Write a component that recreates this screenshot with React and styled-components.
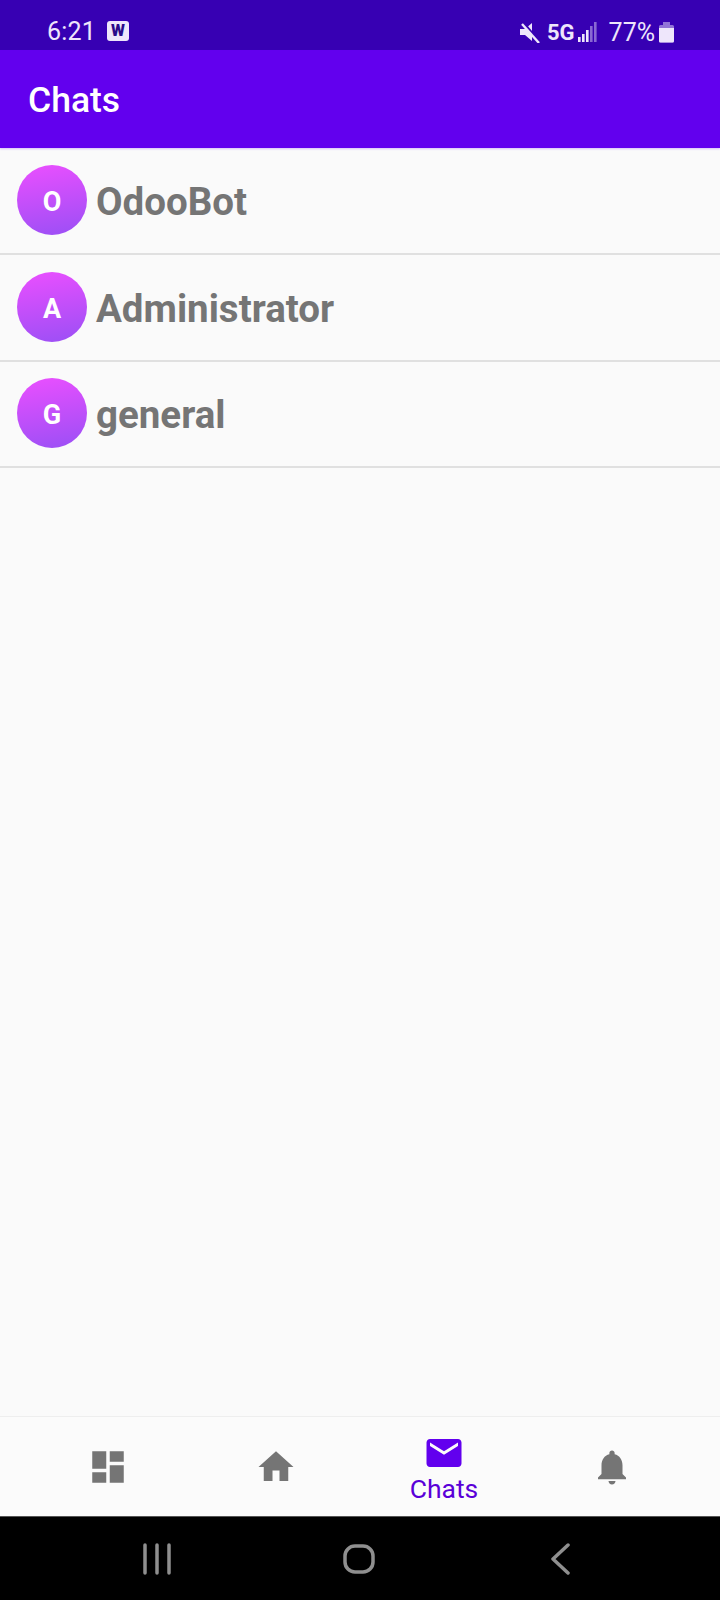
import React from 'react'
import styled, { createGlobalStyle } from 'styled-components'

const GlobalStyle = createGlobalStyle`
  html, body {
    margin: 0;
    padding: 0;
    background: #fafafa;
  }
  * {
    box-sizing: border-box;
  }
`

const Screen = styled.div`
  width: 720px;
  height: 1600px;
  display: flex;
  flex-direction: column;
  background: #fafafa;
  font-family: Roboto, 'Liberation Sans', sans-serif;
`
const StatusBar = styled.div`
  height: 50px;
  flex: none;
  display: flex;
  align-items: center;
  justify-content: space-between;
  padding: 14px 46px 0 47px;
  background: #3700b3;
  color: #eee6fb;
`
const StatusGroup = styled.div`
  display: flex;
  align-items: center;
`
const Clock = styled.span`
  font-size: 25px;
  line-height: 36px;
  letter-spacing: 0.2px;
`
const WBadge = styled.span`
  width: 22px;
  height: 20px;
  margin: -3px 0 0 11px;
  display: flex;
  align-items: center;
  justify-content: center;
  border-radius: 3px;
  background: #eee6fb;
  color: #2a0a8a;
  font-size: 16px;
  font-weight: 900;
`
const NetworkLabel = styled.span`
  margin: 0 3px 0 6px;
  font-size: 22px;
  font-weight: 700;
`
const Battery = styled.span`
  font-size: 25px;
  margin: 0 4px 0 12px;
`
const AppBar = styled.header`
  height: 98px;
  flex: none;
  display: flex;
  align-items: center;
  padding: 2px 0 0 28px;
  background: #6200ee;
  color: #fff;
  font-size: 35.5px;
  font-weight: 500;
  box-shadow: 0 1px 2px rgba(98, 0, 238, 0.25);
`
const ChatList = styled.main`
  flex: 1;
  padding-top: 0.5px;
`
const ChatRow = styled.div`
  height: 106.5px;
  display: flex;
  align-items: center;
  gap: 9px;
  padding: 0 0 1px 17px;
  border-bottom: 2px solid #e0e0e0;
`
const Avatar = styled.div`
  width: 70px;
  height: 70px;
  flex: none;
  display: flex;
  align-items: center;
  justify-content: center;
  padding-top: 4px;
  border-radius: 50%;
  background: linear-gradient(170deg, #eb4fff, #9a4ff5);
  color: #fff;
  font-size: 27px;
  font-weight: 700;
`
const ChatName = styled.span`
  padding-top: 3px;
  color: #757575;
  font-size: 38.5px;
  font-weight: 700;
`
const BottomNav = styled.nav`
  height: 100px;
  flex: none;
  display: grid;
  grid-template-columns: repeat(4, 168px);
  padding: 0 24px;
  border-top: 1px solid #eeeeee;
  background: #fbfbfb;
`
const NavItem = styled.div`
  display: flex;
  flex-direction: column;
  align-items: center;
  justify-content: ${(p) => (p.$active ? 'flex-start' : 'center')};
  padding-top: ${(p) => (p.$active ? '15px' : '0')};
  color: ${(p) => (p.$active ? '#6200ee' : '#757575')};
`
const NavLabel = styled.span`
  font-size: 26.5px;
  line-height: 30px;
  color: #5a00d8;
`
const SystemBar = styled.div`
  height: 84px;
  flex: none;
  display: grid;
  grid-template-columns: 1fr 1fr 1fr;
  align-items: center;
  padding: 0 144px 0 141px;
  background: #000;
  border-top: 1px solid #555;
`
const SystemIcon = styled.svg`
  display: block;
  width: 32px;
  height: 32px;
  justify-self: ${(p) => p.$place};
  fill: none;
  stroke: #8f8f8f;
  stroke-width: 3.5;
  stroke-linecap: round;
  stroke-linejoin: round;
`

function MaterialIcon({ d, size = 42 }) {
  return (
    <svg width={size} height={size} viewBox='0 0 24 24' fill='currentColor'>
      <path d={d} />
    </svg>
  )
}

const icons = {
  dashboard: 'M3 13h8V3H3v10zm0 8h8v-6H3v6zm10 0h8V11h-8v10zm0-18v6h8V3h-8z',
  home: 'M10 20v-6h4v6h5v-8h3L12 3 2 12h3v8z',
  mail: 'M20 4H4c-1.1 0-1.99.9-1.99 2L2 18c0 1.1.9 2 2 2h16c1.1 0 2-.9 2-2V6c0-1.1-.9-2-2-2zm0 4l-8 5-8-5V6l8 5 8-5v2z',
  bell: 'M12 22c1.1 0 2-.9 2-2h-4c0 1.1.89 2 2 2zm6-6v-5c0-3.07-1.64-5.64-4.5-6.32V4c0-.83-.67-1.5-1.5-1.5s-1.5.67-1.5 1.5v.68C7.63 5.36 6 7.92 6 11v5l-2 2v1h16v-1l-2-2z',
}

const chats = ['OdooBot', 'Administrator', 'general']

function MuteIcon() {
  return (
    <svg width='22' height='22' viewBox='0 0 22 22' fill='#eee6fb'>
      <path d='M1 8h5l7-6v18l-7-6H1z' />
      <path d='M4.5 1.5l16 19' stroke='#3700b3' strokeWidth='2' />
      <path d='M3 3l17 19' stroke='#eee6fb' strokeWidth='2.4' />
    </svg>
  )
}

function SignalIcon() {
  return (
    <svg width='19' height='22' viewBox='0 0 19 22' fill='#eee6fb'>
      <rect x='0' y='16' width='2.6' height='5' />
      <rect x='4' y='13' width='2.6' height='8' />
      <rect x='8' y='9' width='2.6' height='12' />
      <rect x='12' y='5' width='2.6' height='16' opacity='0.45' />
      <rect x='16' y='1' width='2.6' height='20' opacity='0.45' />
    </svg>
  )
}

function BatteryIcon() {
  return (
    <svg width='15' height='22' viewBox='0 0 15 22' fill='#eee6fb'>
      <path d='M4 1h7v3H4z' opacity='0.5' />
      <path d='M0 5.5a1.5 1.5 0 0 1 1.5-1.5h12A1.5 1.5 0 0 1 15 5.5V20a1.5 1.5 0 0 1-1.5 1.5h-12A1.5 1.5 0 0 1 0 20z' opacity='0.5' />
      <path d='M0 7h15v13a1.5 1.5 0 0 1-1.5 1.5h-12A1.5 1.5 0 0 1 0 20z' />
    </svg>
  )
}

export default function App() {
  return (
    <Screen>
      <GlobalStyle />
      <StatusBar>
        <StatusGroup>
          <Clock>6:21</Clock>
          <WBadge>W</WBadge>
        </StatusGroup>
        <StatusGroup>
          <MuteIcon />
          <NetworkLabel>5G</NetworkLabel>
          <SignalIcon />
          <Battery>77%</Battery>
          <BatteryIcon />
        </StatusGroup>
      </StatusBar>
      <AppBar>Chats</AppBar>
      <ChatList>
        {chats.map((name) => (
          <ChatRow key={name}>
            <Avatar>{name[0].toUpperCase()}</Avatar>
            <ChatName>{name}</ChatName>
          </ChatRow>
        ))}
      </ChatList>
      <BottomNav>
        <NavItem>
          <MaterialIcon d={icons.dashboard} />
        </NavItem>
        <NavItem>
          <MaterialIcon d={icons.home} />
        </NavItem>
        <NavItem $active>
          <MaterialIcon d={icons.mail} />
          <NavLabel>Chats</NavLabel>
        </NavItem>
        <NavItem>
          <MaterialIcon d={icons.bell} />
        </NavItem>
      </BottomNav>
      <SystemBar>
        <SystemIcon $place='start' viewBox='0 0 32 32'>
          <path d='M4 2v28M16 2v28M28 2v28' />
        </SystemIcon>
        <SystemIcon $place='center' viewBox='0 0 32 32'>
          <rect x='2' y='3' width='28' height='26' rx='10' />
        </SystemIcon>
        <SystemIcon $place='end' viewBox='0 0 32 32'>
          <path d='M24 2L9 16l15 14' />
        </SystemIcon>
      </SystemBar>
    </Screen>
  )
}
